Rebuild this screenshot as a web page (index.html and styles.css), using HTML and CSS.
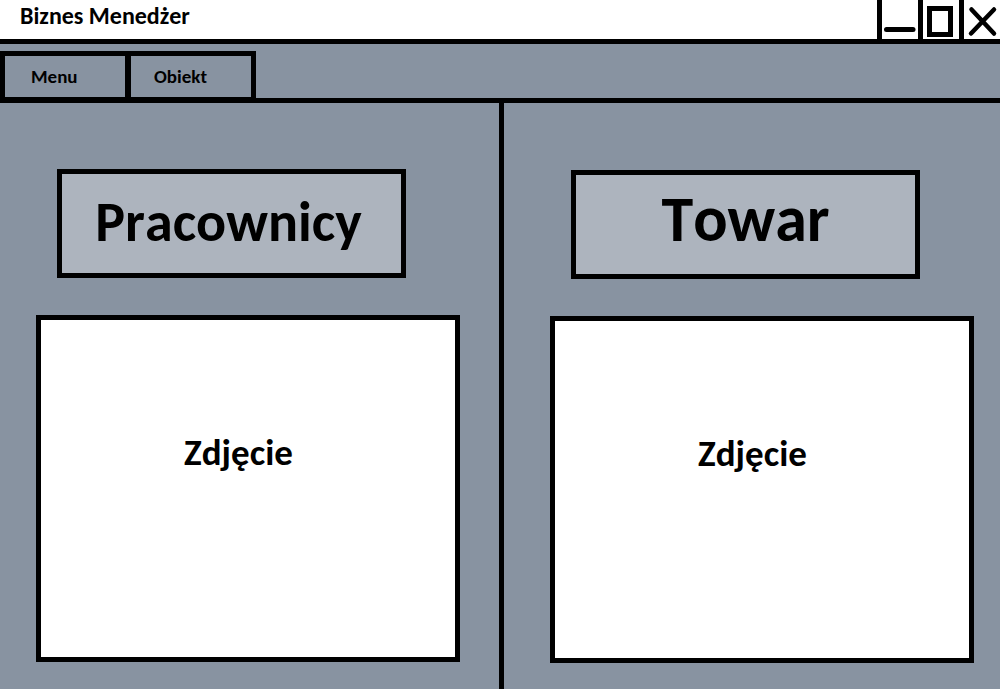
FILE: index.html
```html
<!DOCTYPE html>
<html lang="pl">
<head>
<meta charset="utf-8">
<meta name="viewport" content="width=device-width, initial-scale=1">
<title>Biznes Menedżer</title>
<link rel="stylesheet" href="styles.css">
</head>
<body>
<header class="titlebar">
  <h1 class="title">Biznes Menedżer</h1>
  <div class="controls">
    <button class="control" type="button" aria-label="Minimalizuj">
      <svg class="icon" viewBox="0 0 36 39"><path d="M4.500 29.500H31" stroke-linecap="round"/></svg>
    </button>
    <button class="control" type="button" aria-label="Maksymalizuj">
      <svg class="icon" viewBox="0 0 36 39"><path d="M6.500 8.500H27.500V34.500H6.500Z"/></svg>
    </button>
    <button class="control" type="button" aria-label="Zamknij">
      <svg class="icon" viewBox="0 0 36 39"><path d="M7.500 9.500L30 33.500M30 9.500L7 33.500" stroke-width="4.500" stroke-linecap="round"/></svg>
    </button>
  </div>
</header>
<nav class="menubar">
  <button class="tab" type="button">Menu</button>
  <button class="tab" type="button">Obiekt</button>
</nav>
<main class="panels">
  <section class="panel panel-staff">
    <button class="action" type="button">Pracownicy</button>
    <div class="photo">Zdjęcie</div>
  </section>
  <section class="panel panel-goods">
    <button class="action action-large" type="button">Towar</button>
    <div class="photo">Zdjęcie</div>
  </section>
</main>
</body>
</html>
```
FILE: styles.css
```css
* {
  box-sizing: border-box;
}

body {
  margin: 0;
  min-height: 100vh;
  display: flex;
  flex-direction: column;
  background: #8893a1;
  color: #000;
  font-family: Calibri, Carlito, Lato, sans-serif;
  font-weight: 700;
  font-kerning: none;
}

button {
  font: inherit;
  font-kerning: none;
  color: inherit;
}

.titlebar {
  display: flex;
  justify-content: space-between;
  background: #fff;
  border-bottom: 5px solid #000;
}

.title {
  margin: 0;
  padding: 4px 20px 0;
  font-size: 24px;
  line-height: 24px;
}

.controls {
  display: flex;
}

.control {
  display: flex;
  padding: 0;
  border: 0;
  border-left: 5px solid #000;
  background: none;
}

.icon {
  width: 36px;
  height: 39px;
  fill: none;
  stroke: #000;
  stroke-width: 5px;
}

.menubar {
  display: flex;
  padding-top: 7px;
  border-bottom: 5px solid #000;
}

.tab {
  width: 131px;
  height: 47px;
  padding: 0 0 0 26px;
  border: 5px solid #000;
  border-right-width: 6px;
  border-bottom-width: 1px;
  background: none;
  font-size: 19px;
  text-align: left;
}

.tab + .tab {
  width: 125px;
  padding-left: 23px;
  border-left: 0;
  border-right-width: 5px;
}

.panels {
  flex: 1;
  display: grid;
  grid-template-columns: 1fr 1fr;
}

.panel {
  display: flex;
  flex-direction: column;
  gap: 37px;
}

.panel-staff {
  padding: 66px 40px 27px 36px;
}

.panel-goods {
  padding: 67px 26px 26px 46px;
  border-left: 5px solid #000;
  margin-left: -1px;
}

.action {
  height: 109px;
  margin: 0 54px 0 21px;
  padding: 0 6px 4px 0;
  border: 5px solid #000;
  background: #adb4be;
  font-size: 56px;
  line-height: 60px;
}

.action-large {
  padding: 0 0 12px;
  font-size: 64px;
}

.photo {
  flex: 1;
  display: flex;
  align-items: center;
  justify-content: center;
  padding: 0 19px 72px 0;
  border: 5px solid #000;
  background: #fff;
  font-size: 37px;
  line-height: 40px;
}
```
